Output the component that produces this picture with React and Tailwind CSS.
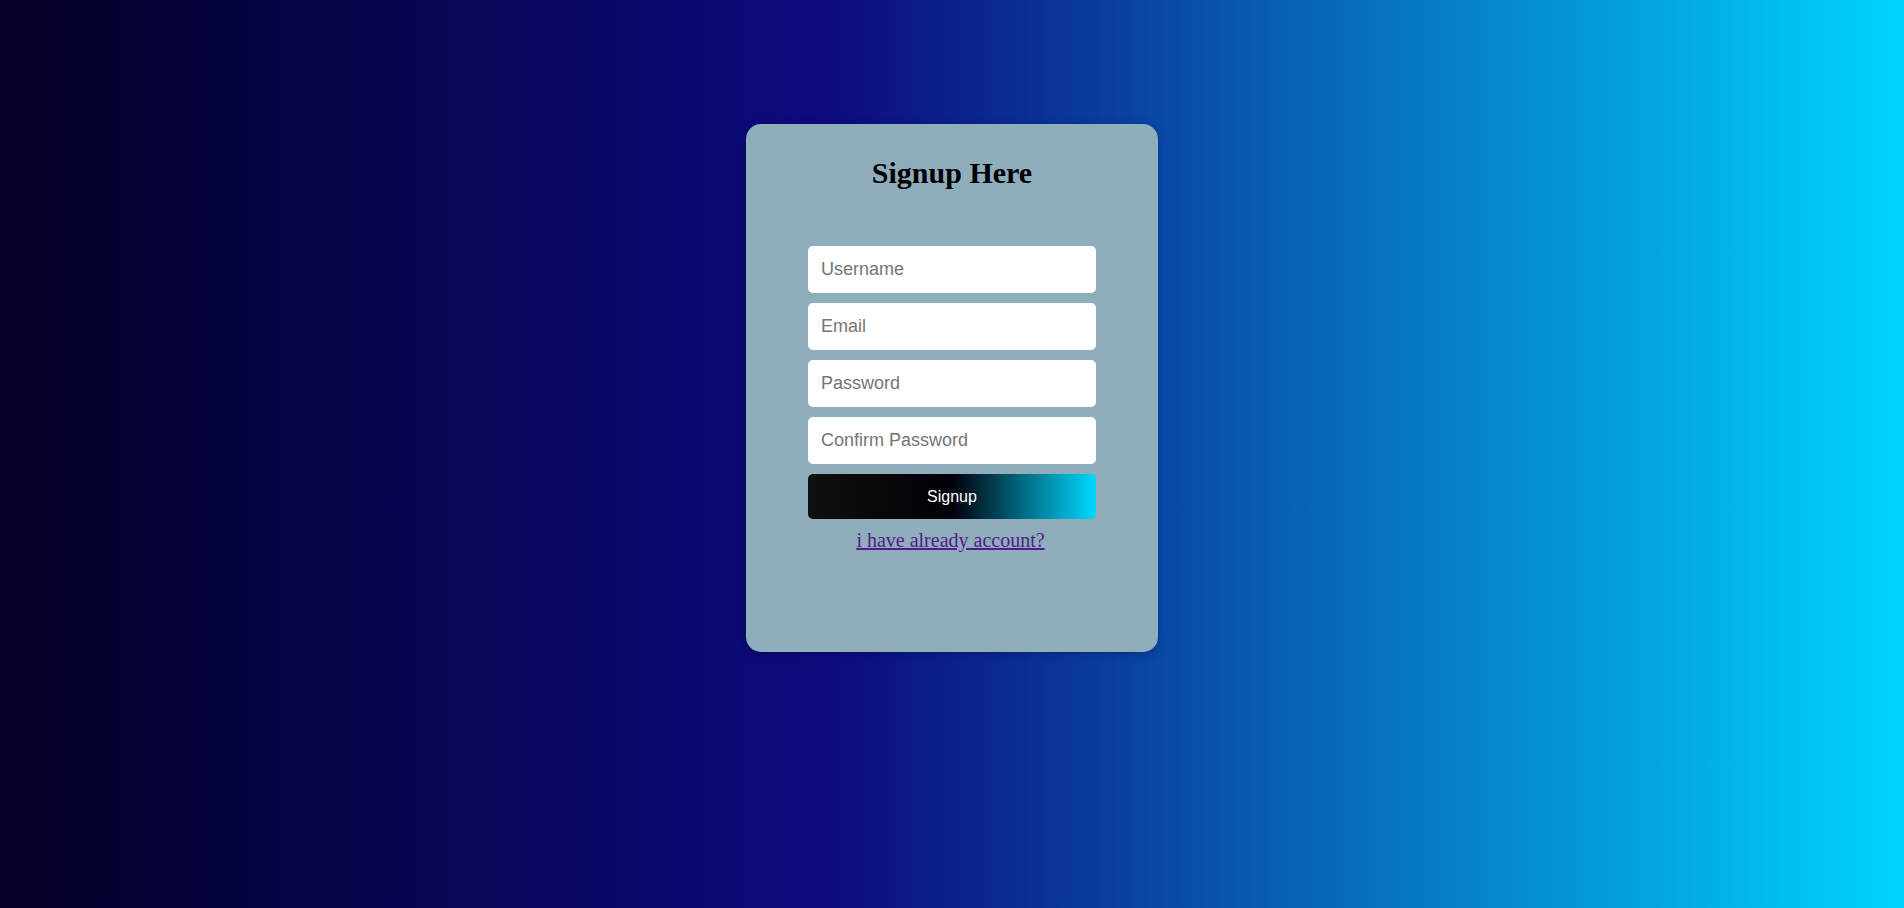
export default function App() {
  const fields = [
    { type: "text", placeholder: "Username" },
    { type: "email", placeholder: "Email" },
    { type: "password", placeholder: "Password" },
    { type: "password", placeholder: "Confirm Password" },
  ];

  return (
    <div className="min-h-screen w-full bg-[linear-gradient(90deg,#020024_0%,#0d0b80_44%,#00d4ff_100%)] flex justify-center pt-[124px]">
      <div className="w-[412px] h-[528px] bg-[#8daeba] rounded-[15px] shadow-[0_2px_10px_rgba(0,0,0,0.25)] flex flex-col items-center pt-[32px]">
        {/* Heading */}
        <h1 className="font-['Liberation_Serif',serif] font-bold text-[30px] leading-[33px] text-black">
          Signup Here
        </h1>

        <form className="mt-[57px] w-[288px] flex flex-col gap-[10px]" onSubmit={(e) => e.preventDefault()}>
          {fields.map((f) => (
            <input
              key={f.placeholder}
              type={f.type}
              placeholder={f.placeholder}
              className="h-[47px] w-full bg-white rounded-[5px] px-[13px] font-['Liberation_Sans',Arial,sans-serif] text-[18px] text-black placeholder:text-[#757575] outline-none"
            />
          ))}
          <button
            type="submit"
            className="h-[45px] w-full rounded-[5px] bg-[linear-gradient(90deg,#0e0f0f_0%,#020008_50%,#00d8ff_100%)] text-white font-['Liberation_Sans',Arial,sans-serif] text-[16px]"
          >
            Signup
          </button>
          <div className="text-center pr-[3px]">
            <a
              href="#"
              className="font-['Liberation_Serif',serif] text-[20px] leading-[23px] text-[#551a8b] underline"
            >
              i have already account?
            </a>
          </div>
        </form>
      </div>
    </div>
  );
}
